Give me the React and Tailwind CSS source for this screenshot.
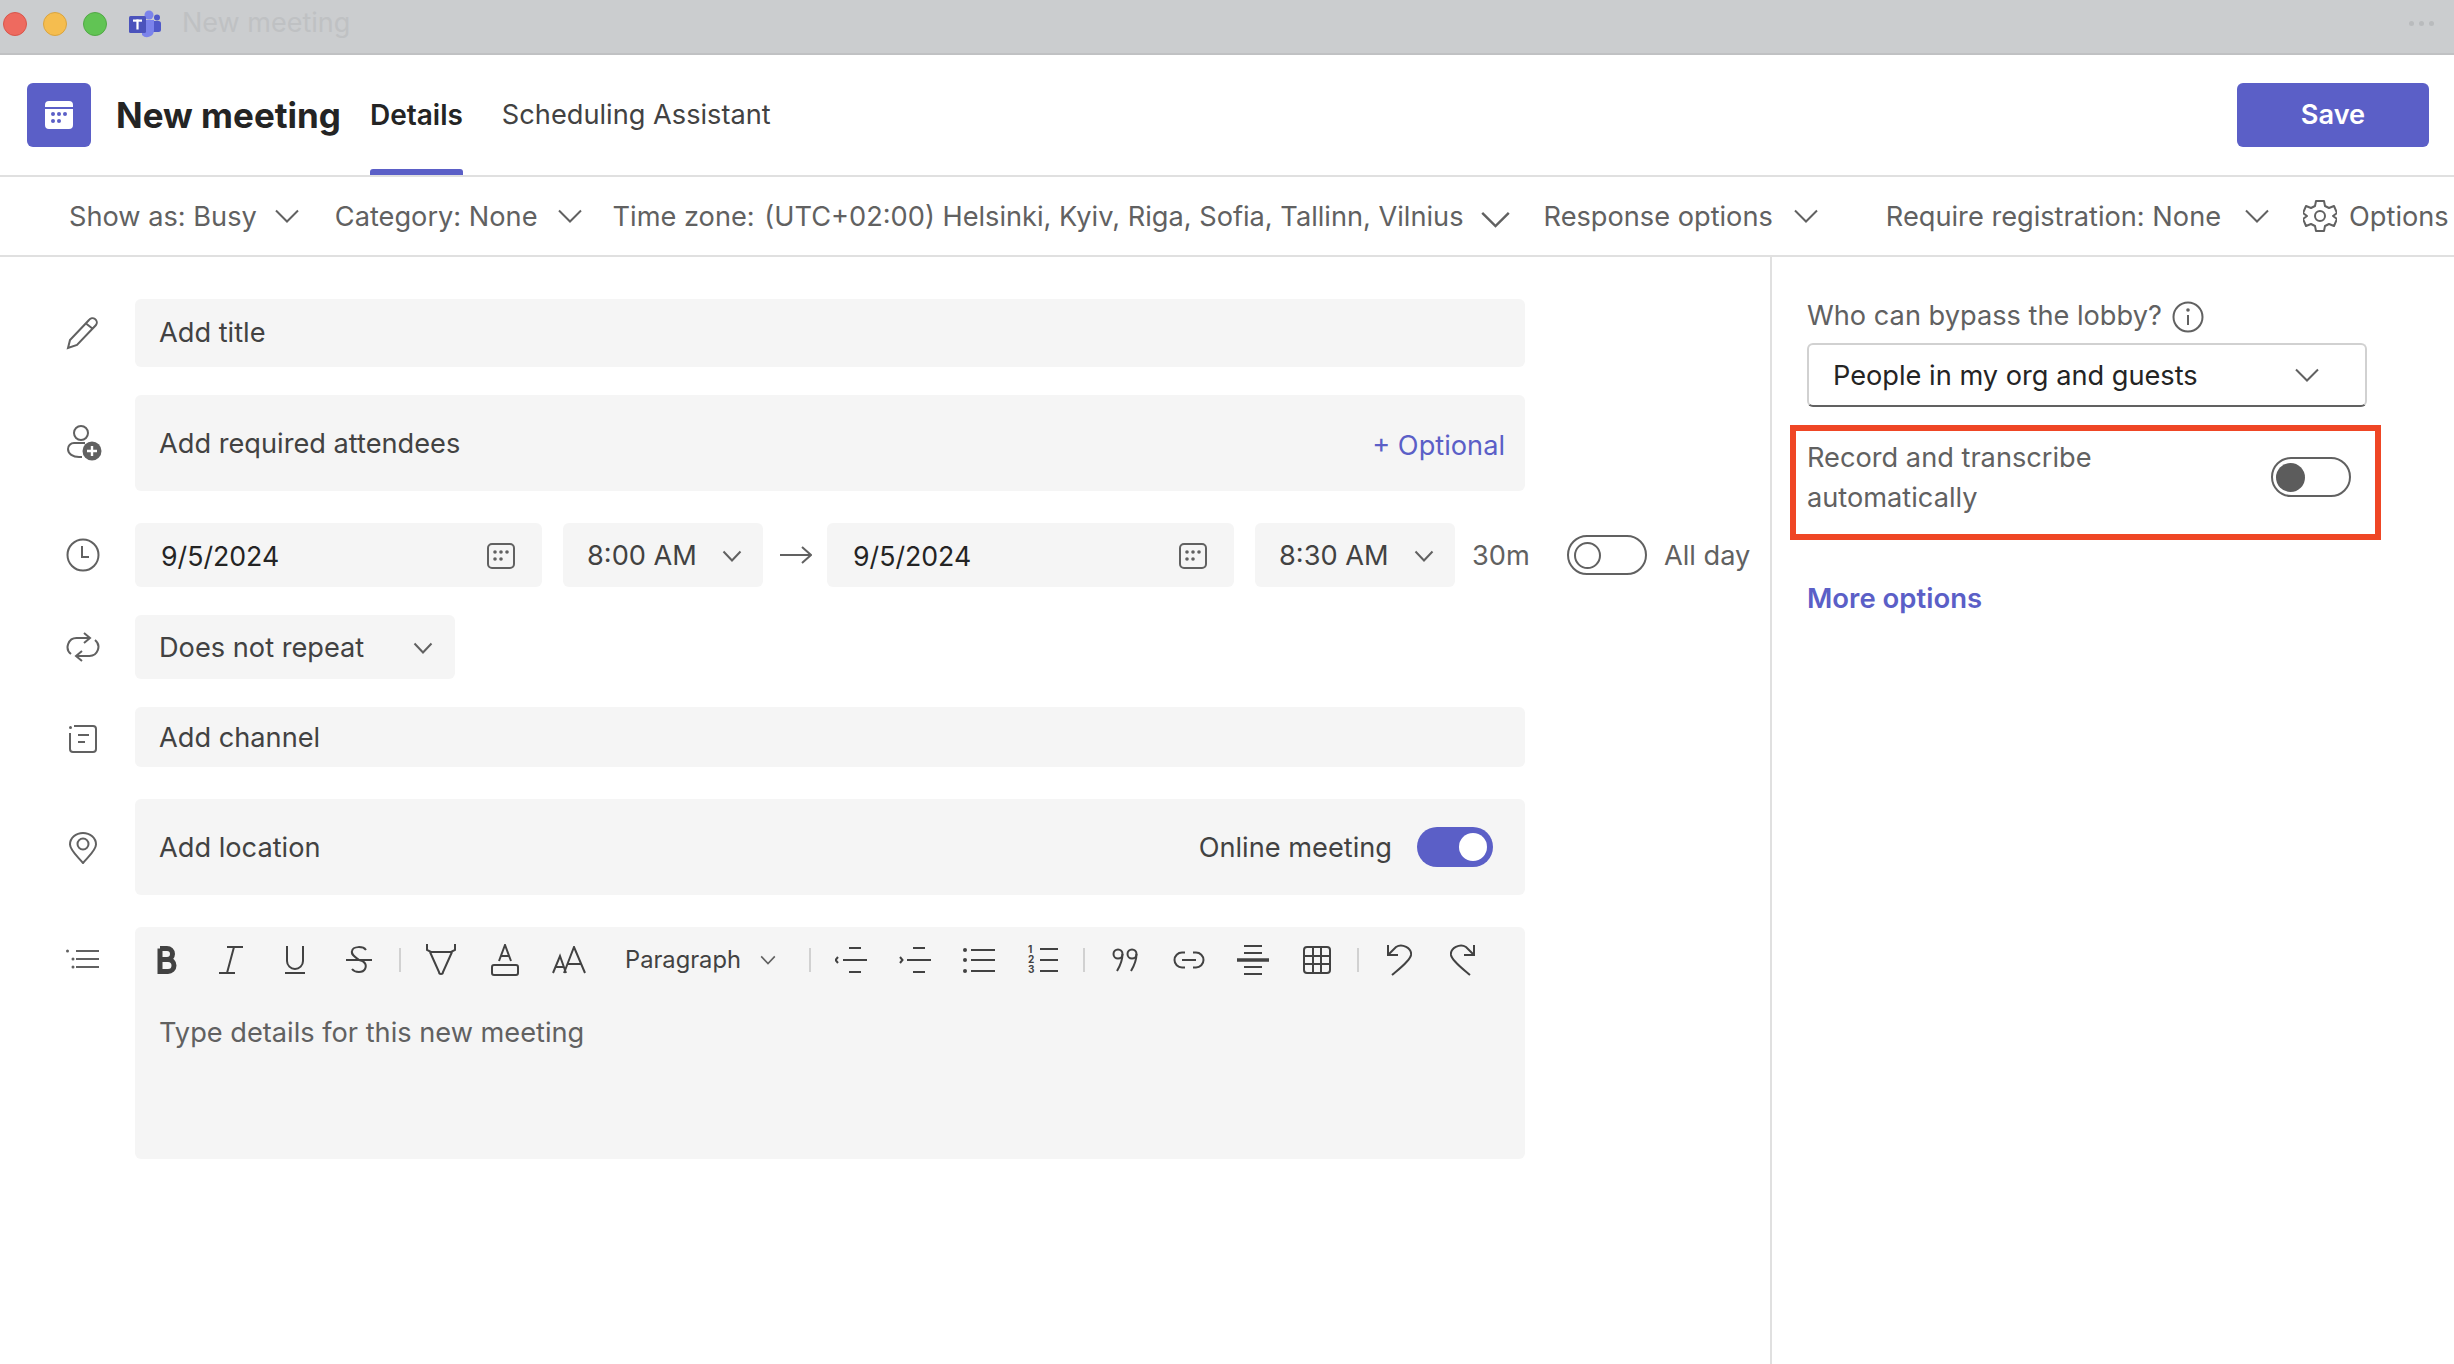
const font = { fontFamily: "Inter, 'Noto Sans', sans-serif" };

function Chevron({ className = "w-[24px] h-[14px]" }) {
  return (
    <svg viewBox="0 0 24 14" className={className} fill="none" stroke="#616161" strokeWidth="2">
      <path d="M1 1.5 L12 12.5 L23 1.5" />
    </svg>
  );
}

function SmallChevron({ className = "w-[20px] h-[12px]" }) {
  return (
    <svg viewBox="0 0 20 12" className={className} fill="none" stroke="#616161" strokeWidth="2">
      <path d="M1.5 1.5 L10 10.5 L18.5 1.5" />
    </svg>
  );
}

function CalendarGlyph() {
  return (
    <svg viewBox="0 0 28 26" className="w-[28px] h-[26px] shrink-0" fill="none" stroke="#616161" strokeWidth="2">
      <rect x="1" y="1" width="26" height="24" rx="4" />
      <g fill="#616161" stroke="none">
        <circle cx="8" cy="9" r="1.8" />
        <circle cx="14" cy="9" r="1.8" />
        <circle cx="20" cy="9" r="1.8" />
        <circle cx="8" cy="16" r="1.8" />
        <circle cx="14" cy="16" r="1.8" />
      </g>
    </svg>
  );
}

function TeamsLogo() {
  return (
    <svg viewBox="0 0 32 28" className="w-[32px] h-[28px]">
      <circle cx="20" cy="5" r="4.5" fill="#7b83eb" />
      <circle cx="28" cy="7.5" r="3" fill="#5059c9" />
      <rect x="22" y="11" width="10" height="11" rx="2.5" fill="#5059c9" />
      <path d="M13 10 H25 V20 a7 7 0 0 1 -12 5 Z" fill="#7b83eb" />
      <rect x="0" y="6" width="17" height="17" rx="1.5" fill="#4b53bc" />
      <rect x="4" y="9.5" width="9" height="2.2" fill="#fff" />
      <rect x="7.4" y="9.5" width="2.2" height="10" fill="#fff" />
    </svg>
  );
}

const rowIcons = {
  pencil: (
    <svg viewBox="0 0 33 33" className="w-[33px] h-[33px]" fill="none" stroke="#616161" strokeWidth="2">
      <path d="M2 31 L4 23 L23 3 a3.6 3.6 0 0 1 7 5 L11 28 Z M20 6.5 L27 12" />
    </svg>
  ),
  person: (
    <svg viewBox="0 0 36 36" className="w-[36px] h-[36px]" fill="none" stroke="#616161" strokeWidth="2">
      <circle cx="15" cy="8" r="7" />
      <path d="M19 18 H8 a6 6 0 0 0 -6 6 c0 5 5 8 11 8 h3" />
      <circle cx="26" cy="26" r="9.5" fill="#616161" stroke="none" />
      <path d="M26 21 V31 M21 26 H31" stroke="#fff" strokeWidth="2.4" />
    </svg>
  ),
  clock: (
    <svg viewBox="0 0 34 34" className="w-[34px] h-[34px]" fill="none" stroke="#616161" strokeWidth="2">
      <circle cx="17" cy="17" r="15.5" />
      <path d="M16 8 V19 H23" />
    </svg>
  ),
  repeat: (
    <svg viewBox="0 0 34 30" className="w-[34px] h-[30px]" fill="none" stroke="#616161" strokeWidth="2">
      <path d="M18 1 L24 6 L18 11 M24 6 H11 a9 9 0 0 0 -6 16" />
      <path d="M16 29 L10 24 L16 19 M10 24 H23 a9 9 0 0 0 6 -16" />
    </svg>
  ),
  channel: (
    <svg viewBox="0 0 30 30" className="w-[30px] h-[30px] ml-[2px] mt-[3px]" fill="none" stroke="#616161" strokeWidth="2">
      <path d="M6 2 H25 a3 3 0 0 1 3 3 V25 a3 3 0 0 1 -3 3 H5 a3 3 0 0 1 -3 -3 V9" />
      <circle cx="2.5" cy="3.5" r="1.5" fill="#616161" stroke="none" />
      <path d="M10 11 H21 M10 18 H17" />
    </svg>
  ),
  pin: (
    <svg viewBox="0 0 30 32" className="w-[30px] h-[32px] ml-[2px] mt-[2px]" fill="none" stroke="#616161" strokeWidth="2">
      <path d="M15 31 C9 24 2 18 2 12.5 A13 11.5 0 0 1 28 12.5 C28 18 21 24 15 31 Z" strokeLinejoin="round" />
      <circle cx="15" cy="12" r="5.5" />
    </svg>
  ),
  list: (
    <svg viewBox="0 0 34 20" className="w-[34px] h-[20px]" fill="none" stroke="#616161" strokeWidth="2">
      <path d="M10 2 H33 M10 10 H33 M10 18 H33" />
      <circle cx="1.5" cy="2" r="1.5" fill="#616161" stroke="none" />
      <circle cx="7" cy="10" r="1.5" fill="#616161" stroke="none" />
      <circle cx="7" cy="18" r="1.5" fill="#616161" stroke="none" />
    </svg>
  ),
};

const editorIcons = {
  bold: (
    <svg viewBox="0 0 20 28" className="w-[20px] h-[28px]" fill="none" stroke="#424242" strokeWidth="5">
      <path d="M3 2.5 V25.5 H11 a6 6 0 0 0 0 -12 H3 M3 13.5 H10 a5.5 5.5 0 0 0 0 -11 H3" />
    </svg>
  ),
  italic: (
    <svg viewBox="0 0 26 28" className="w-[26px] h-[28px]" fill="none" stroke="#424242" strokeWidth="2">
      <path d="M9 1 H25 M1 27 H17 M16 1 L9 27" />
    </svg>
  ),
  underline: (
    <svg viewBox="0 0 20 28" className="w-[20px] h-[28px]" fill="none" stroke="#424242" strokeWidth="2">
      <path d="M2 0 V15 a8 8 0 0 0 16 0 V0 M0 27 H20" />
    </svg>
  ),
  strike: (
    <svg viewBox="0 0 26 28" className="w-[26px] h-[28px]" fill="none" stroke="#424242" strokeWidth="2">
      <path d="M20 4 C17 0 7 0 6 5 C5 9 9 11 13 14 M0 14 H26 M13 14 C19 15 21 19 19 23 C17 27 9 27 6 23" />
    </svg>
  ),
  highlight: (
    <svg viewBox="0 0 32 32" className="w-[32px] h-[32px]" fill="none" stroke="#424242" strokeWidth="2">
      <path d="M2 0 V6 L6 8 H26 L30 6 V0 M5 8 L14 28 a2 2 0 0 0 4 0 L27 8" />
    </svg>
  ),
  fontColor: (
    <svg viewBox="0 0 28 32" className="w-[28px] h-[32px]" fill="none" stroke="#424242" strokeWidth="2">
      <path d="M8 17 L14 1 L20 17 M10 12 H18" />
      <rect x="1" y="21" width="26" height="10" rx="2" />
    </svg>
  ),
  fontSize: (
    <svg viewBox="0 0 34 28" className="w-[34px] h-[28px]" fill="none" stroke="#424242" strokeWidth="2">
      <path d="M1 27 L8 10 L14 27 M3.5 21 H12 M12 27 L22 1 L33 27 M15.5 18 H29" />
    </svg>
  ),
  outdent: (
    <svg viewBox="0 0 32 32" className="w-[32px] h-[32px]" fill="none" stroke="#424242" strokeWidth="2">
      <path d="M14 4 H26 M8 16 H32 M14 28 H26 M3 13 L0.5 16 L3 19" />
    </svg>
  ),
  indent: (
    <svg viewBox="0 0 32 32" className="w-[32px] h-[32px]" fill="none" stroke="#424242" strokeWidth="2">
      <path d="M14 4 H26 M8 16 H32 M14 28 H26 M1 13 L3.5 16 L1 19" />
    </svg>
  ),
  bullets: (
    <svg viewBox="0 0 32 32" className="w-[32px] h-[32px]" fill="none" stroke="#424242" strokeWidth="2">
      <path d="M8 6 H32 M8 16 H32 M8 27 H32" />
      <circle cx="2" cy="6" r="2" fill="#424242" stroke="none" />
      <circle cx="2" cy="16" r="2" fill="#424242" stroke="none" />
      <circle cx="2" cy="27" r="2" fill="#424242" stroke="none" />
    </svg>
  ),
  numbers: (
    <svg viewBox="0 0 30 32" className="w-[30px] h-[32px] overflow-visible" fill="none" stroke="#424242" strokeWidth="2">
      <path d="M12 5 H30 M12 16 H30 M12 27 H30" />
      <g fill="#424242" stroke="none" fontSize="10" fontWeight="700" fontFamily="Inter, sans-serif">
        <text x="0" y="9">1</text>
        <text x="0" y="19">2</text>
        <text x="0" y="29">3</text>
      </g>
    </svg>
  ),
  quote: (
    <svg viewBox="0 0 26 24" className="w-[26px] h-[24px]" fill="none" stroke="#424242" strokeWidth="2">
      <circle cx="6" cy="6" r="4.5" />
      <circle cx="20" cy="6" r="4.5" />
      <path d="M10.5 6 C10.5 12 8 18 5 23 M24.5 6 C24.5 12 22 18 19 23" />
    </svg>
  ),
  link: (
    <svg viewBox="0 0 32 18" className="w-[32px] h-[18px]" fill="none" stroke="#424242" strokeWidth="2">
      <path d="M12 1.5 H9 a7.5 7.5 0 0 0 0 15 H12 M20 1.5 H23 a7.5 7.5 0 0 1 0 15 H20 M9 9 H23" />
    </svg>
  ),
  rule: (
    <svg viewBox="0 0 32 32" className="w-[32px] h-[32px]" fill="none" stroke="#424242" strokeWidth="2">
      <path d="M7 2 H25 M7 9 H25 M7 23 H25 M7 30 H25" />
      <path d="M0 16 H32" strokeWidth="3.5" />
    </svg>
  ),
  table: (
    <svg viewBox="0 0 28 28" className="w-[28px] h-[28px]" fill="none" stroke="#424242" strokeWidth="2">
      <rect x="1" y="1" width="26" height="26" rx="3" />
      <path d="M10 1 V27 M18 1 V27 M1 10 H27 M1 18 H27" />
    </svg>
  ),
  undo: (
    <svg viewBox="0 0 26 32" className="w-[26px] h-[32px]" fill="none" stroke="#424242" strokeWidth="2">
      <path d="M2 1 V11 H12 M2 11 L10 3 C16 -1 26 4 25 11 C24 17 13 25 6 31" />
    </svg>
  ),
  redo: (
    <svg viewBox="0 0 26 32" className="w-[26px] h-[32px]" fill="none" stroke="#424242" strokeWidth="2">
      <path d="M24 1 V11 H14 M24 11 L16 3 C10 -1 0 4 1 11 C2 17 13 25 20 31" />
    </svg>
  ),
};

function Sep() {
  return (
    <div className="w-[18px] flex justify-center">
      <div className="w-[2px] h-[24px] bg-[#d1d1d1]" />
    </div>
  );
}

function EdBtn({ name }) {
  return <div className="w-16 h-[64px] flex items-center justify-center shrink-0">{editorIcons[name]}</div>;
}

function Row({ icon, children, className = "" }) {
  return (
    <div className={"flex items-center " + className}>
      <div className="w-[135px] pl-[66px] shrink-0 flex items-center">{rowIcons[icon]}</div>
      {children}
    </div>
  );
}

function Field({ children, className = "" }) {
  return <div className={"bg-[#f5f5f5] rounded-[6px] flex items-center " + className}>{children}</div>;
}

function OptionItem({ children, className = "", chevron = <Chevron />, chevronClass = "ml-[21px]" }) {
  return (
    <div className={"flex items-center shrink-0 " + className}>
      <span className="pt-[2px]">{children}</span>
      <span className={chevronClass}>{chevron}</span>
    </div>
  );
}

export default function App() {
  return (
    <div className="w-full h-screen flex flex-col bg-white overflow-hidden text-[27.2px] text-[#616161]" style={font}>
      {/* window chrome */}
      <div className="h-[55px] shrink-0 flex items-center bg-[#cbcdcf] border-b-2 border-[#c0c1c3] pl-[3px] pr-[20px] pb-[6px]">
        <div className="w-[24px] h-[24px] rounded-full bg-[#ee6a5f] border border-[#d8564b]" />
        <div className="w-[24px] h-[24px] rounded-full bg-[#f5bd4f] border border-[#d9a440] ml-[16px]" />
        <div className="w-[24px] h-[24px] rounded-full bg-[#61c454] border border-[#52a846] ml-[16px]" />
        <div className="ml-[22px]">
          <TeamsLogo />
        </div>
        <span className="ml-[21px] text-[#bfc1c3] text-[27px]">New meeting</span>
        <div className="ml-auto flex gap-[5px]">
          <div className="w-[5px] h-[5px] rounded-full bg-[#b9bbbd]" />
          <div className="w-[5px] h-[5px] rounded-full bg-[#b9bbbd]" />
          <div className="w-[5px] h-[5px] rounded-full bg-[#b9bbbd]" />
        </div>
      </div>

      {/* header */}
      <div className="h-[122px] shrink-0 flex items-center pl-[27px] pr-[25px] border-b-[2px] border-[#e0e0e0]">
        <div className="w-16 h-16 rounded-[6px] bg-[#5b5fc7] flex items-center justify-center">
          <svg viewBox="0 0 28 28" className="w-[28px] h-[28px]">
            <path d="M4 0 H24 a4 4 0 0 1 4 4 V6 H0 V4 a4 4 0 0 1 4 -4 Z M0 8 H28 V24 a4 4 0 0 1 -4 4 H4 a4 4 0 0 1 -4 -4 Z" fill="#fff" />
            <g fill="#5b5fc7">
              <circle cx="8" cy="13" r="2" />
              <circle cx="14" cy="13" r="2" />
              <circle cx="20" cy="13" r="2" />
              <circle cx="8" cy="20" r="2" />
              <circle cx="14" cy="20" r="2" />
            </g>
          </svg>
        </div>
        <h1 className="ml-[25px] text-[35px] font-bold text-[#242424] whitespace-nowrap">New meeting</h1>
        <div className="relative ml-[29px] h-full flex items-center text-[28px] text-[#242424] font-semibold">
          Details
          <span className="absolute left-0 right-0 bottom-0 h-[6px] rounded-t-[3px] bg-[#5b5fc7]" />
        </div>
        <div className="ml-[39px] text-[#424242]">Scheduling Assistant</div>
        <button className="ml-auto w-[192px] h-16 rounded-[6px] bg-[#5b5fc7] text-white font-semibold">Save</button>
      </div>

      {/* options bar */}
      <div className="h-[80px] shrink-0 flex items-center pl-[69px] border-b-[2px] border-[#e0e0e0] whitespace-nowrap overflow-hidden">
        <OptionItem chevronClass="ml-[18px]">Show as: Busy</OptionItem>
        <OptionItem className="ml-[36px]" chevronClass="ml-[20px]">Category: None</OptionItem>
        <OptionItem
          className="ml-[31px]"
          chevronClass="ml-[17px] mt-[8px]"
          chevron={<Chevron className="w-[29px] h-[17px]" />}
        >
          Time zone:<span className="ml-[2px]"> (UTC+02:00) Helsinki, Kyiv, Riga, Sofia, Tallinn, Vilnius</span>
        </OptionItem>
        <OptionItem className="ml-[34px]">Response options</OptionItem>
        <OptionItem className="ml-[68px]" chevronClass="ml-[24px]">Require registration: None</OptionItem>
        <div className="flex items-center shrink-0 ml-[34px]">
          <svg viewBox="0 0 34 34" className="w-[34px] h-[34px]" fill="none" stroke="#616161" strokeWidth="2">
            <path d="M13 2 h8 l1 5 l4 2 l5 -2 l3 7 l-4 3 l4 3 l-3 7 l-5 -2 l-4 2 l-1 5 h-8 l-1 -5 l-4 -2 l-5 2 l-3 -7 l4 -3 l-4 -3 l3 -7 l5 2 l4 -2 Z" strokeLinejoin="round" />
            <circle cx="17" cy="17" r="5" />
          </svg>
          <span className="ml-[12px] pt-[2px]">Options</span>
        </div>
      </div>

      {/* body */}
      <div className="flex-1 flex min-h-0">
        <div className="w-[1770px] shrink-0 pt-[42px]">
          <Row icon="pencil">
            <Field className="w-[1390px] h-[68px] pl-[24px] text-[#424242]">Add title</Field>
          </Row>
          <Row icon="person" className="mt-[28px]">
            <Field className="w-[1390px] h-[96px] pl-[24px] pr-[20px] pt-[2px] text-[#424242] justify-between">
              <span>Add required attendees</span>
              <span className="text-[#5b5fc7] mt-[4px]">+ Optional</span>
            </Field>
          </Row>
          <Row icon="clock" className="mt-[32px]">
            <Field className="w-[407px] h-16 pl-[26px] pr-[27px] pt-[2px] text-[#242424] justify-between">
              <span className="text-[26.7px]">9/5/2024</span>
              <CalendarGlyph />
            </Field>
            <Field className="ml-[21px] w-[200px] h-16 pl-[24px] pr-[21px] pt-[2px] text-[#424242] justify-between">
              <span>8:00 AM</span>
              <SmallChevron />
            </Field>
            <svg viewBox="0 0 32 20" className="w-[32px] h-[20px] ml-[17px]" fill="none" stroke="#616161" strokeWidth="2">
              <path d="M0 10 H31 M22 2 L31 10 L22 18" />
            </svg>
            <Field className="ml-[15px] w-[407px] h-16 pl-[26px] pr-[27px] pt-[2px] text-[#242424] justify-between">
              <span className="text-[26.7px]">9/5/2024</span>
              <CalendarGlyph />
            </Field>
            <Field className="ml-[21px] w-[200px] h-16 pl-[24px] pr-[21px] pt-[2px] text-[#424242] justify-between">
              <span>8:30 AM</span>
              <SmallChevron />
            </Field>
            <span className="ml-[17px] w-[58px] pt-[2px] whitespace-nowrap">30m</span>
            <div className="ml-[37px] w-[80px] h-[40px] rounded-full border-2 border-[#616161] flex items-center pl-[5px] shrink-0">
              <div className="w-[27px] h-[27px] rounded-full border-2 border-[#616161]" />
            </div>
            <span className="ml-[17px] pt-[2px]">All day</span>
          </Row>
          <Row icon="repeat" className="mt-[28px]">
            <Field className="w-[320px] h-16 pl-[24px] pr-[22px] pt-[2px] text-[#424242] justify-between">
              <span>Does not repeat</span>
              <SmallChevron />
            </Field>
          </Row>
          <Row icon="channel" className="mt-[28px]">
            <Field className="w-[1390px] h-[60px] pl-[24px] pt-[2px] text-[#424242]">Add channel</Field>
          </Row>
          <Row icon="pin" className="mt-[32px]">
            <Field className="w-[1390px] h-[96px] pl-[24px] pr-[32px] text-[#424242]">
              <span className="pt-[2px]">Add location</span>
              <span className="ml-auto pt-[2px]">Online meeting</span>
              <div className="ml-[25px] w-[76px] h-[40px] rounded-full bg-[#5b5fc7] flex items-center justify-end pr-[6px]">
                <div className="w-[28px] h-[28px] rounded-full bg-white" />
              </div>
            </Field>
          </Row>
          <div className="flex items-start mt-[32px]">
            <div className="w-[135px] pl-[66px] pt-[22px] shrink-0 flex">{rowIcons.list}</div>
            <div className="w-[1390px] h-[232px] bg-[#f5f5f5] rounded-[6px]">
              <div className="flex items-center h-[64px] mt-[1px]">
                <EdBtn name="bold" />
                <EdBtn name="italic" />
                <EdBtn name="underline" />
                <EdBtn name="strike" />
                <Sep />
                <EdBtn name="highlight" />
                <EdBtn name="fontColor" />
                <EdBtn name="fontSize" />
                <div className="w-[200px] pl-[24px] flex items-center text-[23.7px] text-[#424242]">
                  <span>Paragraph</span>
                  <SmallChevron className="ml-[19px] w-[16px] h-[10px]" />
                </div>
                <Sep />
                <EdBtn name="outdent" />
                <EdBtn name="indent" />
                <EdBtn name="bullets" />
                <EdBtn name="numbers" />
                <Sep />
                <EdBtn name="quote" />
                <EdBtn name="link" />
                <EdBtn name="rule" />
                <EdBtn name="table" />
                <Sep />
                <EdBtn name="undo" />
                <EdBtn name="redo" />
              </div>
              <div className="pl-[24px] mt-[21px]">Type details for this new meeting</div>
            </div>
          </div>
        </div>

        {/* side panel */}
        <div className="flex-1 border-l-2 border-[#e0e0e0] pt-[37px] pl-[18px]">
          <div className="pl-[17px] h-[42px] flex items-center">
            <span className="pt-[2px]">Who can bypass the lobby?</span>
            <svg viewBox="0 0 32 32" className="w-[32px] h-[32px] ml-[10px] mt-[4px]" fill="none" stroke="#616161" strokeWidth="2">
              <circle cx="16" cy="16" r="14.5" />
              <path d="M16 14 V24" />
              <circle cx="16" cy="9" r="1.8" fill="#616161" stroke="none" />
            </svg>
          </div>
          <div className="ml-[17px] mt-[7px] w-[560px] h-16 rounded-[6px] border-2 border-[#d1d1d1] border-b-[#616161] flex items-center justify-between pl-[24px] pr-[46px] text-[#242424]">
            <span className="pt-[2px]">People in my org and guests</span>
            <Chevron />
          </div>
          <div className="mt-[18px] w-[591px] h-[115px] border-[6px] border-[#ef4625] flex pl-[11px] pr-[24px] pt-[7px]">
            <div className="w-[420px] leading-[40px]">Record and transcribe automatically</div>
            <div className="ml-auto mt-[19px] w-[80px] h-[40px] rounded-full border-2 border-[#616161] flex items-center pl-[3px]">
              <div className="w-[29px] h-[29px] rounded-full bg-[#5c5c5c]" />
            </div>
          </div>
          <div className="ml-[17px] mt-[37px] text-[27.5px] leading-[42px] text-[#5b5fc7] font-semibold">More options</div>
        </div>
      </div>
    </div>
  );
}
